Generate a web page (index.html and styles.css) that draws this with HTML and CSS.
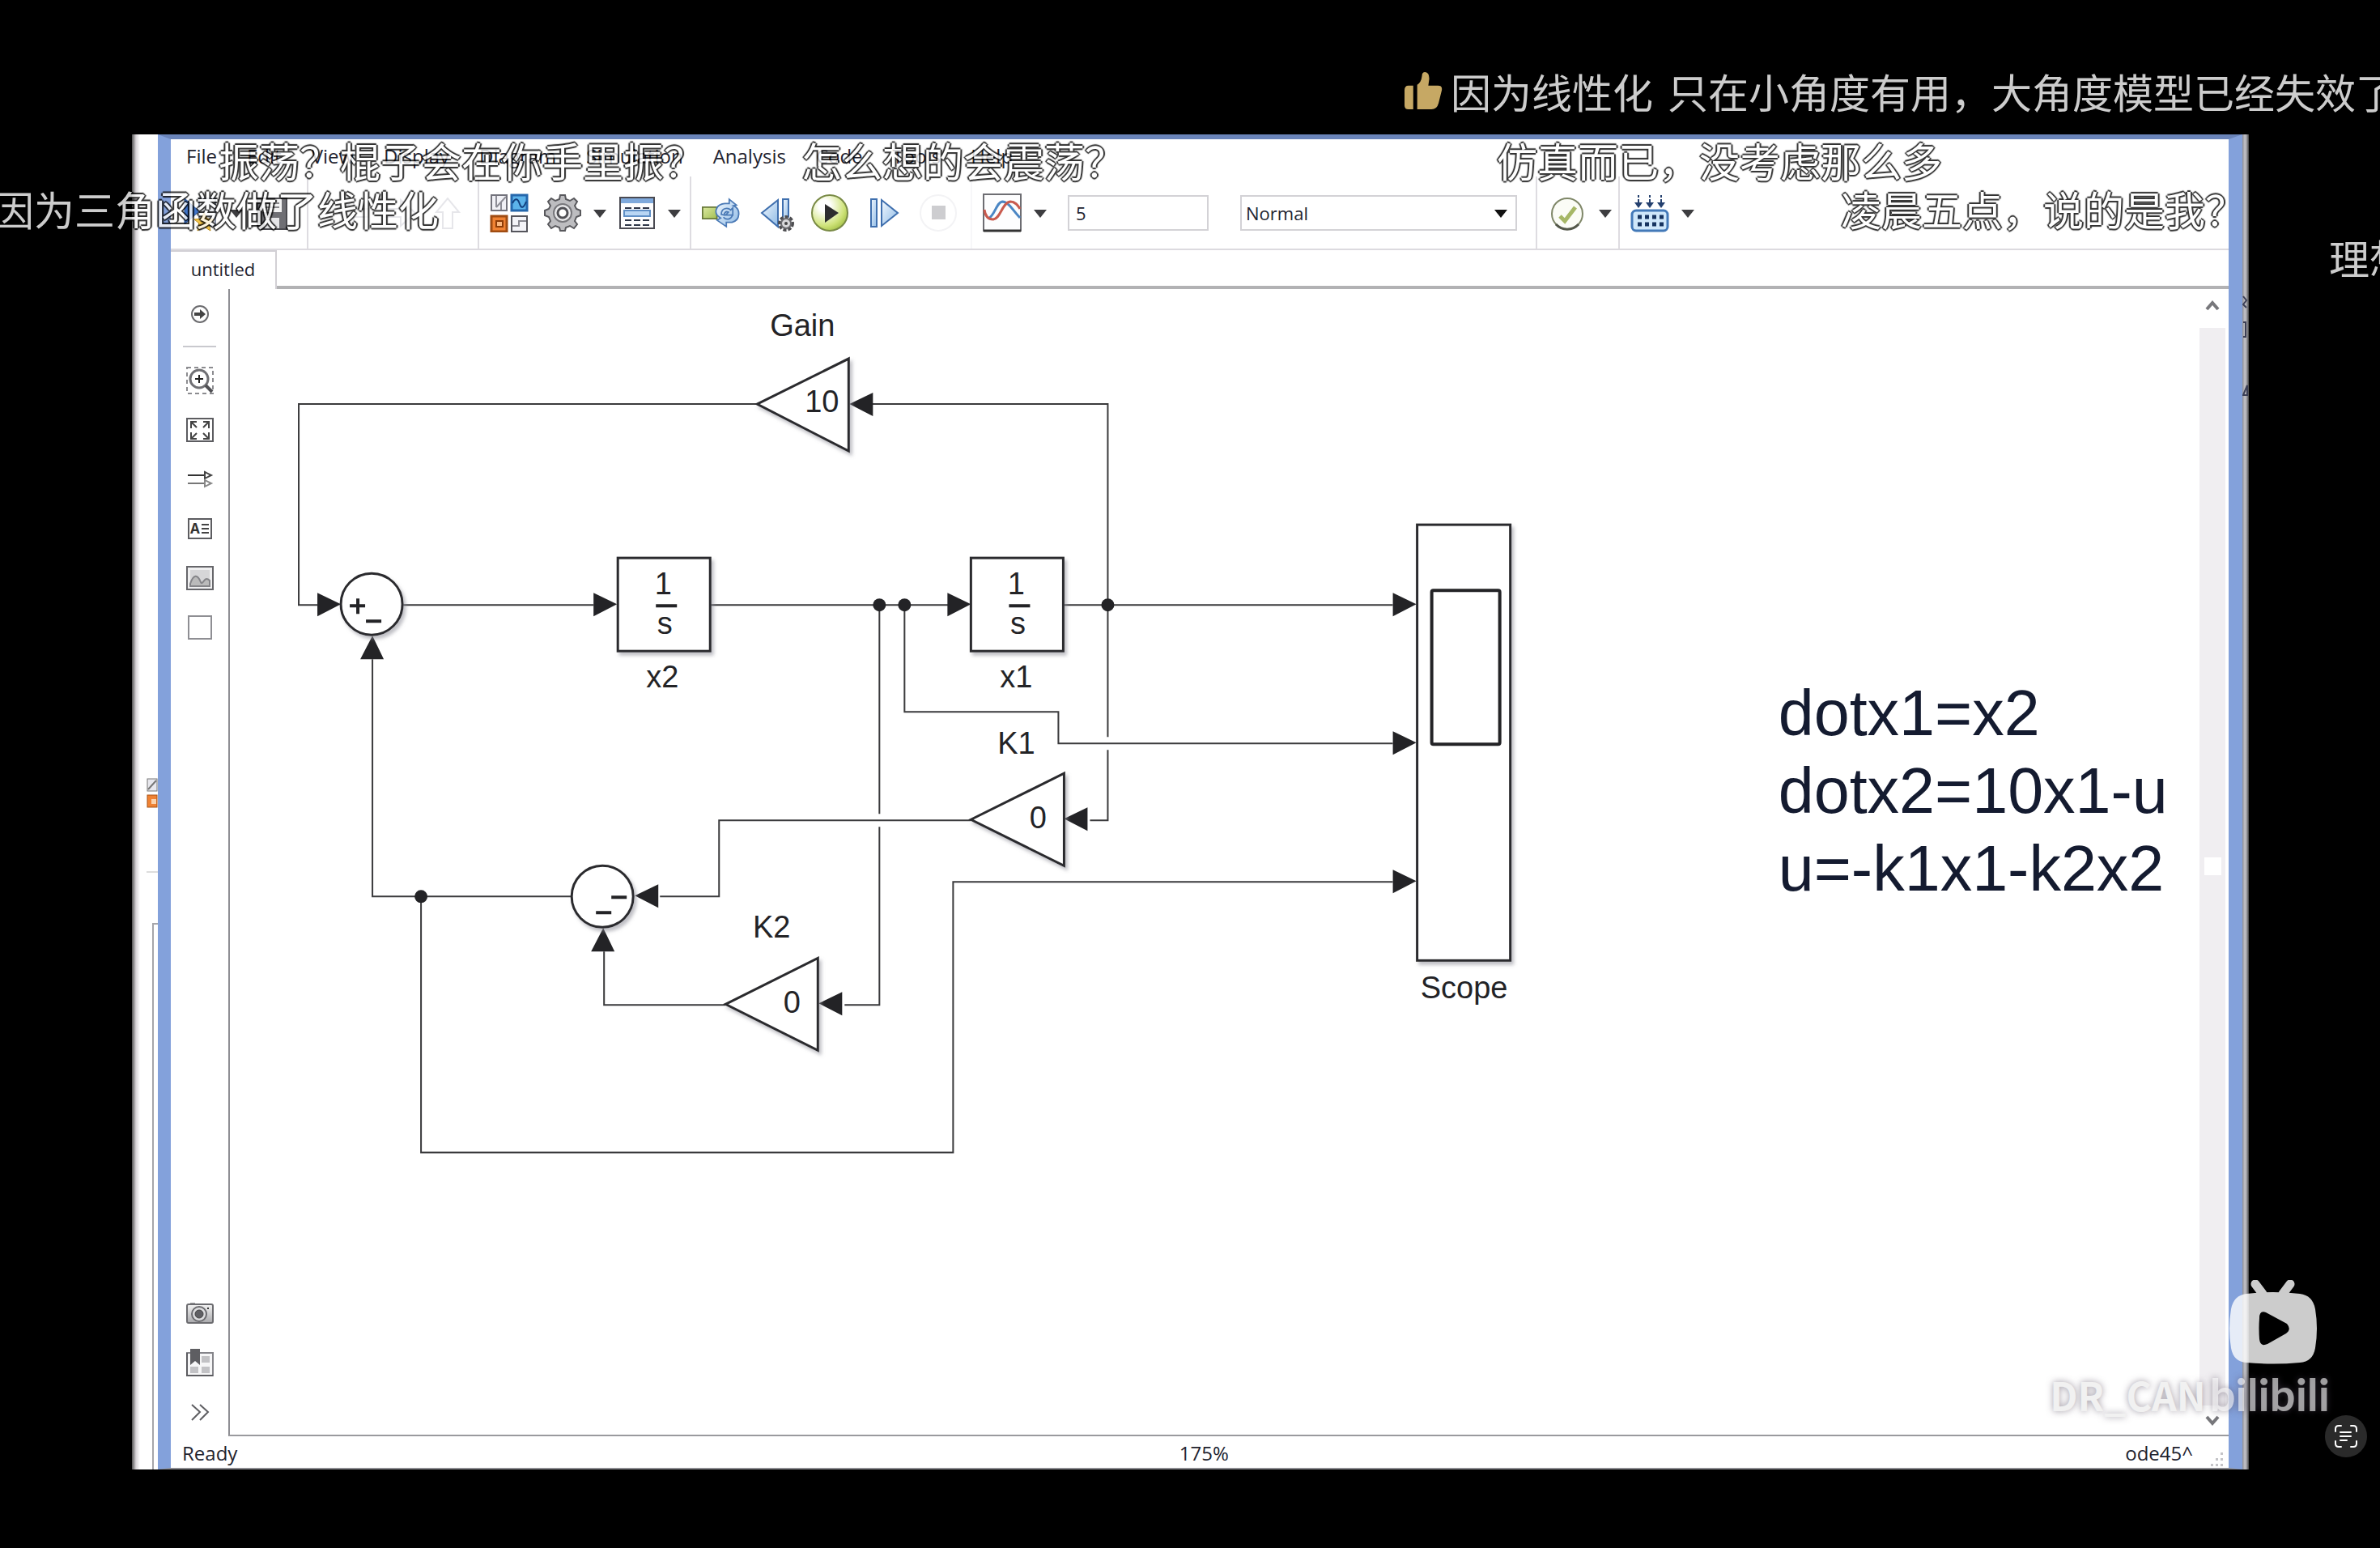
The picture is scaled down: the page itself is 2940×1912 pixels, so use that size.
FILE: index.html
```html
<!DOCTYPE html>
<html lang="zh-CN">
<head>
<meta charset="utf-8">
<title>untitled - Simulink</title>
<link rel="stylesheet" href="styles.css">
</head>
<body>
<svg class="defs" width="0" height="0" aria-hidden="true">
  <defs>
    <linearGradient id="blue" x1="0" y1="0" x2="1" y2="1"><stop offset="0" stop-color="#f2f8fe"/><stop offset="1" stop-color="#8fbbe6"/></linearGradient>
    <linearGradient id="gray" x1="0" y1="0" x2="0" y2="1"><stop offset="0" stop-color="#f4f4f4"/><stop offset="1" stop-color="#a9a9ac"/></linearGradient>
    <radialGradient id="green" cx=".35" cy=".3" r=".8"><stop offset="0.2" stop-color="#fff"/><stop offset="0.7" stop-color="#cfe37a"/><stop offset="1" stop-color="#9cbb3c"/></radialGradient>
    <linearGradient id="lime" x1="0" y1="0" x2="1" y2="1"><stop offset="0" stop-color="#dbe9a0"/><stop offset="1" stop-color="#a3bf52"/></linearGradient>
    <symbol id="caret" viewBox="0 0 20 20"><path d="M2 6h16l-8 10z" fill="#3d3d40"/></symbol>
  </defs>
</svg>

<main class="video">
  <div class="edge-left">
    <svg class="peek" width="14" height="38" viewBox="0 0 14 38"><rect x="1" y="1" width="12" height="15" fill="#e8e8ee" stroke="#777"/><path d="M2 14L12 3" stroke="#777" stroke-width="2"/><rect x="1" y="21" width="12" height="15" fill="#f08233" stroke="#a85316"/><path d="M6 26h6v6H6z" fill="#fbd2ac"/></svg>
    <div class="peek-line"></div>
    <div class="peek-panel"></div>
  </div>

  <section class="window">
    <nav class="menubar">
      <button>File</button><button>Edit</button><button>View</button><button>Display</button><button>Diagram</button><button>Simulation</button><button>Analysis</button><button>Code</button><button>Tools</button><button>Help</button>
    </nav>

    <div class="toolbar">
      <div class="group g-file">
        <button aria-label="New model"><svg viewBox="0 0 48 48"><path d="M4 6l18 16L4 38z" fill="#3f74c9" stroke="#234f97"/><path d="M22 6h20v34H22z" fill="#f4f6fb" stroke="#8a93a8" stroke-width="2"/><path d="M28 24l4 7 8 1-6 5 2 9-8-5-8 5 2-9-6-5 8-1z" fill="#f5c64b" stroke="#b98a1d"/></svg></button>
        <button class="dd" aria-label="New options"><svg><use href="#caret"/></svg></button>
        <button aria-label="Save"><svg viewBox="0 0 48 48"><path d="M6 6h36v38H10l-4-4z" fill="#6f6f74" stroke="#4b4b50" stroke-width="2"/><path d="M12 7h24v16H12z" fill="#f2f2f2"/><path d="M15 12h18M15 17h18" stroke="#88888c" stroke-width="2"/><path d="M15 30h18v13H15z" fill="#e6e6e8"/></svg></button>
      </div>
      <div class="group g-nav">
        <button aria-label="Back"><svg viewBox="0 0 48 48"><path d="M42 19H24V8L6 24l18 16V29h18z" class="faint"/></svg></button>
        <button aria-label="Forward"><svg viewBox="0 0 48 48"><path d="M6 19h18V8l18 16-18 16V29H6z" class="faint"/></svg></button>
        <button aria-label="Up"><svg viewBox="0 0 48 48"><path d="M18 43V23H10L24 6l14 17h-8v20z" class="faint"/></svg></button>
      </div>
      <div class="group g-model">
        <button class="lib" aria-label="Library browser"><svg viewBox="0 0 48 48"><path d="M2 2h19v19H2z" fill="#f1f1f6" stroke="#73737c" stroke-width="2"/><path d="M8 3v14M8 17L20 4M14 11v9" stroke="#8d8d96" stroke-width="2" fill="none"/><path d="M27 2h19v19H27z" fill="#5cb3ea" stroke="#2467ac" stroke-width="3"/><path d="M28 12c4-8 7-5 9 1s5 5 8-3" stroke="#123f7d" stroke-width="2" fill="none"/><path d="M2 28h19v19H2z" fill="#f08233" stroke="#a04c12" stroke-width="3"/><path d="M8 34h8v7H8z" fill="#fbb77e" stroke="#8d3c08" stroke-width="2"/><path d="M27 28h19v19H27z" fill="#f4f4f8" stroke="#55555c" stroke-width="2"/><path d="M28 40h8v-6h9" stroke="#8a8a92" stroke-width="2" fill="none"/></svg></button>
        <button aria-label="Model configuration"><svg viewBox="0 0 48 48"><path d="M21 2h6l1 5 5 2 5-3 4 4-3 5 2 4 5 2v6l-5 2-2 5 3 4-4 5-5-3-5 2-1 4h-6l-1-4-5-2-5 3-4-5 3-4-2-5-5-2v-6l5-2 2-4-3-5 4-4 5 3 5-2z" fill="#bdbdc0" stroke="#58585c" stroke-width="2"/><circle cx="24" cy="24" r="11" fill="#e9e9eb" stroke="#77777b" stroke-width="2"/><circle cx="24" cy="24" r="6" fill="#fff" stroke="#505055" stroke-width="3"/></svg></button>
        <button class="dd" aria-label="Configuration options"><svg><use href="#caret"/></svg></button>
        <button aria-label="Model explorer"><svg viewBox="0 0 48 48"><path d="M3 5h42v38H3z" fill="#fdfdfe" stroke="#4a4a52" stroke-width="2"/><path d="M4 6h40v6H4z" fill="#7fa9dc"/><path d="M8 21h32v7H8z" fill="#b9d6f4" stroke="#5f8fc6" stroke-width="2"/><path d="M9 18h8M20 18h8M31 18h8M9 33h8M20 33h8M31 33h8M9 39h8M20 39h8M31 39h8" stroke="#2e3648" stroke-width="2"/></svg></button>
        <button class="dd" aria-label="Explorer options"><svg><use href="#caret"/></svg></button>
      </div>
      <div class="group g-sim">
        <button aria-label="Update diagram"><svg viewBox="0 0 54 48"><path d="M1 16h20v16H1z" fill="url(#lime)" stroke="#68793a" stroke-width="2"/><path d="M38 5l10 8-4 1c10 4 10 20-2 23h-8v6L21 34l5-3C15 25 19 12 32 11h6z" fill="url(#blue)" stroke="#4b7ab6" stroke-width="2"/><path d="M27 26c0-9 9-10 13-6l3-3v10H33l4-4c-4-2-6 1-6 4zM43 26c-2 8-10 8-13 4" fill="none" stroke="#4b7ab6" stroke-width="2"/></svg></button>
        <button aria-label="Step back"><svg viewBox="0 0 48 48"><path d="M27 8v33L7 24z" fill="url(#blue)" stroke="#3f6fae" stroke-width="2"/><path d="M33 7h7v28h-7z" fill="url(#blue)" stroke="#3f6fae" stroke-width="2"/><circle cx="37" cy="37" r="8" fill="#d8d8da" stroke="#4d4d50" stroke-width="4" stroke-dasharray="4 2"/><circle cx="37" cy="37" r="6" fill="#d8d8da" stroke="#6a6a6e" stroke-width="2"/><circle cx="37" cy="37" r="2" fill="#444"/></svg></button>
        <button aria-label="Run"><svg viewBox="0 0 48 48"><circle cx="24" cy="24" r="22" fill="url(#green)" stroke="#798a45" stroke-width="2"/><path d="M18 13l17 11-17 12z" fill="#2d2d2f"/></svg></button>
        <button aria-label="Step forward"><svg viewBox="0 0 48 48"><path d="M8 7h7v34H8z" fill="url(#blue)" stroke="#3f6fae" stroke-width="2"/><path d="M21 8v32l20-16z" fill="url(#blue)" stroke="#3f6fae" stroke-width="2"/></svg></button>
        <button aria-label="Stop"><svg viewBox="0 0 48 48"><circle cx="24" cy="24" r="22" fill="#fff" stroke="#f3f3f5" stroke-width="2"/><path d="M16 15h17v17H16z" fill="#cdcdd0"/></svg></button>
      </div>
      <div class="group g-run">
        <button aria-label="Simulation data inspector"><svg viewBox="0 0 48 48"><path d="M1 1h46v45H1z" fill="#fdfdfe" stroke="#6d6d72" stroke-width="2"/><path d="M7 31c8-4 10-20 17-21 8 0 14 12 22 20" fill="none" stroke="#4b86c4" stroke-width="3"/><path d="M2 20c1 8 4 12 11 12 9-1 11-21 21-22 6 0 9 4 12 9" fill="none" stroke="#c95a4e" stroke-width="3"/><path d="M1 46h46" stroke="#333" stroke-width="3"/></svg></button>
        <button class="dd" aria-label="Inspector options"><svg><use href="#caret"/></svg></button>
        <input class="stop-time" type="text" value="5" aria-label="Simulation stop time">
        <span class="select">
          <select aria-label="Simulation mode"><option>Normal</option><option>Accelerator</option></select>
          <svg class="select-caret" viewBox="0 0 20 20" aria-hidden="true"><path d="M2 6h16l-8 10z" fill="#111"/></svg>
        </span>
      </div>
      <div class="group g-check">
        <button aria-label="Model advisor"><svg viewBox="0 0 48 48"><circle cx="24" cy="25" r="19" fill="#fbfcf6" stroke="#7f8768" stroke-width="2"/><path d="M10 38a19 19 0 0 0 28 0" fill="none" stroke="#54584a" stroke-width="3"/><path d="M15 28l6 6 13-17" fill="none" stroke="#a6b766" stroke-width="5"/></svg></button>
        <button class="dd" aria-label="Advisor options"><svg><use href="#caret"/></svg></button>
      </div>
      <div class="group g-build">
        <button aria-label="Build model"><svg viewBox="0 0 48 48"><path d="M10 2v3M10 7v5M24 2v3M24 7v5M38 2v3M38 7v5" stroke="#24406e" stroke-width="2"/><path d="M5 11h10l-5 7zM19 11h10l-5 7zM33 11h10l-5 7z" fill="#24406e"/><rect x="2" y="21" width="44" height="25" rx="5" fill="#cfe7fa" stroke="#4379b8" stroke-width="3"/><path d="M9 29h32M9 38h32" stroke="#16335f" stroke-width="5" stroke-dasharray="5 4"/></svg></button>
        <button class="dd" aria-label="Build options"><svg><use href="#caret"/></svg></button>
      </div>
    </div>

    <div class="tabs"><button class="tab">untitled</button></div>

    <div class="work">
      <aside class="palette">
        <button aria-label="Hide browser"><svg viewBox="0 0 40 40"><circle cx="20" cy="20" r="10" fill="#fff" stroke="#6d6d70" stroke-width="2"/><path d="M13 18h7v-4l7 6-7 6v-4h-7z" fill="#444"/></svg></button>
        <hr>
        <button aria-label="Zoom"><svg viewBox="0 0 40 40"><path d="M4 4h32v32H4z" fill="none" stroke="#8c8c90" stroke-width="2" stroke-dasharray="5 4"/><circle cx="19" cy="18" r="11" fill="#fff" stroke="#707074" stroke-width="3"/><path d="M19 13v10M14 18h10" stroke="#222" stroke-width="2"/><path d="M27 26l8 8" stroke="#505054" stroke-width="4"/></svg></button>
        <button aria-label="Fit to view"><svg viewBox="0 0 40 40"><path d="M4 6h32v28H4z" fill="#fff" stroke="#5c5c60" stroke-width="2"/><path d="M9 18v-8h7M9 10l7 7M31 18v-8h-7M31 10l-7 7M9 23v8h7M9 31l7-7M31 23v8h-7M31 31l-7-7" fill="none" stroke="#444" stroke-width="2"/></svg></button>
        <button aria-label="Show sample times"><svg viewBox="0 0 40 40"><path d="M5 15h22" stroke="#333" stroke-width="2"/><path d="M26 11l8 4-8 4z" fill="#fff" stroke="#444" stroke-width="2"/><path d="M5 25h22" stroke="#777" stroke-width="2"/><path d="M26 21l8 4-8 4z" fill="#fff" stroke="#888" stroke-width="2"/></svg></button>
        <button aria-label="Annotation"><svg viewBox="0 0 40 40"><path d="M6 8h28v24H6z" fill="#fff" stroke="#5c5c60" stroke-width="2"/><text x="8" y="26" class="glyph-a">A</text><path d="M22 15h9M22 20h9M22 25h9" stroke="#444" stroke-width="2"/></svg></button>
        <button aria-label="Image"><svg viewBox="0 0 40 40"><path d="M4 6h32v28H4z" fill="#f0f0f1" stroke="#66666a" stroke-width="2"/><path d="M8 10h24v20H8z" fill="#d6d6d8"/><path d="M8 27c4-12 9-12 13-2 2 4 4-4 7-4 2 0 3 1 4 2v7H8z" fill="#bbb" stroke="#858589" stroke-width="2"/></svg></button>
        <button aria-label="Area"><svg viewBox="0 0 40 40"><path d="M6 6h28v28H6z" fill="#fff" stroke="#8e8e93" stroke-width="2"/></svg></button>
        <div class="spacer"></div>
        <button aria-label="Screenshot"><svg viewBox="0 0 40 40"><rect x="8" y="7" width="6" height="4" fill="#9a9a9d"/><rect x="4" y="9" width="32" height="23" rx="2" fill="url(#gray)" stroke="#6c6c70" stroke-width="2"/><circle cx="19" cy="21" r="9" fill="#dcdcde" stroke="#6c6c70" stroke-width="2"/><circle cx="19" cy="21" r="5" fill="#606064" stroke="#444" stroke-width="1"/><path d="M30 13v2" stroke="#333" stroke-width="2"/></svg></button>
        <button aria-label="Bookmarks"><svg viewBox="0 0 40 40"><path d="M4 8h32v28H4z" fill="#f6f6f7" stroke="#85858a" stroke-width="2"/><path d="M4 8v28h32" fill="none" stroke="#5c5c60" stroke-width="2"/><path d="M22 12h10v8H22zM22 25h10v8H22zM8 25h10v8H8z" fill="#c2c2c5"/><path d="M8 3h12v20l-6-5-6 5z" fill="#5e5e62"/></svg></button>
        <button aria-label="More"><svg viewBox="0 0 40 40"><path d="M10 11l10 9-10 10M20 11l10 9-10 10" fill="none" stroke="#5e5e62" stroke-width="2"/></svg></button>
      </aside>

      <div class="canvas">
        <svg class="diagram" viewBox="285 356 2432 1400" preserveAspectRatio="xMinYMin meet" role="img" aria-label="Simulink block diagram">
          <defs><filter id="sh" x="-20%" y="-20%" width="150%" height="150%"><feDropShadow dx="3" dy="4" stdDeviation="2" flood-color="#8a8a95" flood-opacity=".55"/></filter></defs>
          <g class="wire">
            <path d="M936 498H370V746H393M1369 746V498H1078M499 746H734M878 746H1172M1315 746H1721"/>
            <path d="M1369 746V909M1369 925V1012H1347M1118 746V878H1308V917H1721"/>
            <path d="M1087 746V1004M1087 1020V1240H1044M897 1240H747V1174M1200 1012H889V1106H816M707 1106H461V813M521 1106V1422H1178V1088H1721"/>
          </g>
          <g class="solid">
            <path d="M393 731v29l29-15zM734 731v29l29-15zM1171 731v29l29-15zM1721 731v29l29-15zM1721 902v29l29-15zM1721 1073v29l29-15z"/>
            <path d="M1079 484v29l-29-15zM1344 996v29l-29-15zM1041 1224v29l-29-15zM814 1091v29l-29-15z"/>
            <path d="M446 813h29l-14-29zM731 1174h29l-14-29z"/>
            <circle cx="1087" cy="746" r="8"/><circle cx="1118" cy="746" r="8"/><circle cx="1369" cy="746" r="8"/><circle cx="521" cy="1106" r="8"/>
          </g>
          <g class="block">
            <path d="M936 498L1049 442V556z"/><path d="M1200 1011L1315 954V1068z"/><path d="M897 1239L1011 1182V1296z"/>
            <circle cx="460" cy="745" r="38"/><circle cx="745" cy="1106" r="38"/>
            <rect x="764" y="688" width="114" height="115"/><rect x="1200" y="688" width="114" height="115"/>
            <rect x="1751" y="647" width="115" height="538"/>
          </g>
          <rect class="screen" x="1769" y="728" width="84" height="190"/>
          <g class="sign"><path d="M433 747h19M443 738v19M453 766h19M756 1107h19M737 1126h19M811 747h26M1247 747h26"/></g>
          <g class="label">
            <text x="992" y="414">Gain</text><text x="1016" y="508">10</text>
            <text x="820" y="733">1</text><text x="822" y="782">s</text><text x="819" y="848">x2</text>
            <text x="1256" y="733">1</text><text x="1258" y="782">s</text><text x="1256" y="848">x1</text>
            <text x="1256" y="930">K1</text><text x="1283" y="1022">0</text>
            <text x="954" y="1157">K2</text><text x="979" y="1250">0</text>
            <text x="1809" y="1232">Scope</text>
          </g>
          <g class="equation"><text x="2197" y="907">dotx1=x2</text><text x="2197" y="1003">dotx2=10x1-u</text><text x="2197" y="1099">u=-k1x1-k2x2</text></g>
        </svg>
        <div class="scrollbar">
          <svg viewBox="0 0 32 48"><path d="M9 25l7-8 7 8" fill="none" stroke="#77777b" stroke-width="4"/></svg>
          <div class="track"><div class="thumb"></div></div>
          <svg viewBox="0 0 32 36"><path d="M9 14l7 8 7-8" fill="none" stroke="#77777b" stroke-width="4"/></svg>
        </div>
      </div>
    </div>

    <footer class="status">
      <span>Ready</span><span class="zoom">175%</span><span class="solver">ode45^</span>
      <svg class="grip" viewBox="0 0 20 20"><path d="M14 1h3v3h-3zM8 8h3v3H8zM14 8h3v3h-3zM2 15h3v3H2zM8 15h3v3H8zM14 15h3v3h-3z" fill="#c4c4c8"/></svg>
    </footer>
  </section>

  <div class="edge-right">
    <svg width="8" height="130" viewBox="0 0 8 130"><path d="M1 2l4 5-4 5 4 4M1 34h3v18H1M1 124l5-12v12z" fill="none" stroke="#3c3f55" stroke-width="2"/></svg>
  </div>
</main>

<div class="danmaku">
  <p class="d1"><svg viewBox="0 0 48 48"><path d="M5 17h6v30H5q-5 0-5-5V23q0-6 5-6zM16 16q5-3 6-11 0-5 4-5 6 1 5 10l-1 7h12q6 0 5 6l-4 16q-2 8-9 8H16z" fill="#f8d37d"/></svg><span>因为线性化</span><span class="rest">只在小角度有用，大角度模型已经失效了</span></p>
  <p class="d2">振荡？棍子会在你手里振？</p>
  <p class="d3">怎么想的会震荡？</p>
  <p class="d4">仿真而已，没考虑那么多</p>
  <p class="d5">因为三角函数做了线性化</p>
  <p class="d6">凌晨五点，说的是我？</p>
  <p class="d7">理想</p>
</div>

<div class="watermark"><span>DR_CAN</span><span class="brand">bilibili</span></div>
<svg class="tv" viewBox="0 0 110 104" aria-hidden="true"><path d="M33 5l9 12M76 5l-9 12" stroke="#fff" stroke-width="11" stroke-linecap="round"/><path fill="#fff" fill-rule="evenodd" d="M22 17Q55 13 88 17 104 19 107 36 111 60 107 84 104 101 88 102 55 105 22 102 6 101 3 84-1 60 3 36 6 19 22 17zM46 40Q38 37 38 47 37 60 38 73 39 83 48 79L71 66Q78 61 72 54z"/></svg>
<button class="scan" aria-label="Recognise text"><svg viewBox="0 0 52 52"><path d="M13 20v-3q0-4 4-4h3M32 13h3q4 0 4 4v3M39 32v3q0 4-4 4h-3M20 39h-3q-4 0-4-4v-3M19 21h13M19 26h13M19 31h8" fill="none" stroke="#fff" stroke-width="2" stroke-linecap="round"/></svg></button>
</body>
</html>
```
FILE: styles.css
```css
* { box-sizing: border-box; }

body {
  position: relative;
  display: flex;
  min-height: 100vh;
  margin: 0;
  padding: 166px 162px 97px 163px;
  background: #000;
  overflow: hidden;
  font: 24px/32px "Open Sans", "Noto Sans", sans-serif;
  color: #22232f;
}

button {
  margin: 0;
  padding: 0;
  border: 0;
  background: none;
  font: inherit;
  color: inherit;
}

svg { display: block; flex: none; }
.defs { position: absolute; }

.video { display: flex; flex: 1; min-width: 0; }

/* Windows that show behind the model window */
.edge-left {
  display: flex;
  flex-direction: column;
  align-items: flex-end;
  width: 32px;
  padding-top: 795px;
  background: linear-gradient(90deg, #555 0, #d8d4d8 5px, #fff 10px);
}
.peek-line { width: 14px; height: 2px; margin-top: 77px; background: #ddd; }
.peek-panel { flex: 1; width: 7px; margin-top: 62px; border-left: 2px solid #a5a5aa; border-top: 2px solid #a5a5aa; }
.edge-right {
  width: 8px;
  padding-top: 198px;
  background: linear-gradient(90deg, #8d8d94 0, #c3c3c9 3px, #a8a8ad 5px, #444 8px);
}

/* Model window */
.window {
  display: flex;
  flex: 1;
  flex-direction: column;
  min-width: 0;
  border: solid #83a1db;
  border-width: 6px 17px 0 16px;
  border-top-color: #6a84b9;
  border-bottom: 2px solid #8b8b90;
  background: #fff;
}

.menubar { display: flex; gap: 37px; height: 46px; padding: 0 19px 4px; align-items: center; }

.toolbar { display: flex; height: 91px; border-bottom: 2px solid #dcdadf; }
.group { display: flex; align-items: center; gap: 13px; padding-left: 13px; border-right: 2px solid #dedce1; }
.group button svg { width: 48px; height: 48px; }
.group .dd svg { width: 20px; height: 20px; }
.group .lib { margin-right: 6px; }
.g-file { width: 170px; gap: 10px; }
.g-nav { width: 211px; gap: 10px; padding-left: 32px; }
.g-model { width: 262px; gap: 12px; }
.g-sim { width: 347px; gap: 19px; border-color: #f7f7f9; }
.g-run { width: 698px; }
.g-check { width: 102px; }
.g-build { border: 0; }
.faint { fill: #fff; stroke: #e6e6ea; stroke-width: 2; }

.stop-time,
.select select {
  height: 44px;
  border: 2px solid #d3d2d6;
  border-radius: 0;
  background: #fff;
  color: inherit;
  font: inherit;
  font-size: 22px;
}
.stop-time { width: 174px; margin: 0 26px 0 11px; padding: 0 8px; }
.select { position: relative; }
.select select { display: block; width: 342px; padding: 0 5px; appearance: none; }
.select-caret { position: absolute; top: 12px; right: 10px; width: 20px; height: 20px; }

.tabs { display: flex; height: 48px; border-bottom: 4px solid #b2b2b4; }
.tab { width: 131px; margin-bottom: -4px; padding-bottom: 5px; border: solid #d2d0d5; border-width: 2px 2px 0 0; background: #fff; font-size: 22px; }

.work { display: flex; flex: 1; min-height: 0; }
.palette { display: flex; flex-direction: column; align-items: center; width: 71px; }
.palette button { display: grid; place-items: center; width: 61px; height: 61px; }
.palette button svg { width: 40px; height: 40px; }
.palette hr { width: 41px; height: 2px; margin: 9px 0 10px; border: 0; background: #c9c9ce; }
.spacer { flex: 1; }
.glyph-a { font: bold 17px "Open Sans", sans-serif; fill: #333; }

.canvas { display: flex; flex: 1; min-width: 0; border-left: 2px solid #8f8f94; border-bottom: 2px solid #9a9a9e; }
.diagram { flex: 1; min-width: 0; height: 100%; }
.wire { fill: none; stroke: #3a3a3c; stroke-width: 2; }
.solid { fill: #232326; }
.block { fill: #fff; stroke: #2c2c2e; stroke-width: 3; filter: url(#sh); }
.screen { fill: #fff; stroke: #232326; stroke-width: 4; rx: 2px; }
.sign { fill: none; stroke: #232326; stroke-width: 4; }
.label { font: 38px "Liberation Sans", Arial, sans-serif; fill: #232326; text-anchor: middle; }
.equation { font: 79px "Liberation Sans", Arial, sans-serif; fill: #141b30; }

.scrollbar { display: flex; flex-direction: column; width: 36px; padding-right: 4px; }
.track { flex: 1; padding: 654px 5px 0 6px; background: #f0eef1; }
.thumb { height: 22px; background: #fff; }

.status { display: grid; grid-template-columns: 21fr 20fr 20fr; position: relative; height: 39px; padding: 4px 44px 0 14px; line-height: 34px; }
.zoom { text-align: center; }
.solver { text-align: right; }
.grip { position: absolute; right: 4px; bottom: 0; width: 20px; height: 20px; }

/* Bullet comments over the video */
.danmaku { position: absolute; inset: 0; overflow: hidden; opacity: .8; pointer-events: none; }
.danmaku p {
  position: absolute;
  display: flex;
  align-items: center;
  margin: 0;
  font: 50px/60px "Noto Sans CJK SC", sans-serif;
  white-space: nowrap;
  color: #fff;
  text-shadow: 2px 0 1px #000, -2px 0 1px #000, 0 2px 1px #000, 0 -2px 1px #000, 0 0 3px #000;
}
.d1 svg { width: 47px; height: 47px; margin-right: 10px; }
.d1 .rest { margin-left: 18px; }
.danmaku .d1 { top: 82px; left: 1735px; }
.danmaku .d2 { top: 167px; left: 270px; }
.danmaku .d3 { top: 167px; left: 990px; }
.danmaku .d4 { top: 167px; left: 1849px; }
.danmaku .d5 { top: 227px; left: -8px; }
.danmaku .d6 { top: 227px; left: 2274px; }
.danmaku .d7 { top: 287px; left: 2877px; }

/* Player marks */
.watermark {
  position: absolute;
  right: 62px;
  bottom: 160px;
  display: flex;
  gap: 5px;
  align-items: baseline;
  font: 700 48px/60px "Noto Sans CJK SC", sans-serif;
  color: #f1f1f1;
  text-shadow: 0 0 8px rgba(80, 70, 90, .55);
}
.brand { font: bold 56px/60px "Liberation Sans Narrow", "Lato", sans-serif; color: rgba(255, 255, 255, .6); }
.tv { position: absolute; right: 77px; bottom: 227px; width: 110px; height: 104px; opacity: .8; }
.scan { position: absolute; right: 16px; bottom: 112px; width: 52px; height: 52px; border-radius: 50%; background: #2a2a2a; }
.scan svg { width: 52px; height: 52px; }
```
